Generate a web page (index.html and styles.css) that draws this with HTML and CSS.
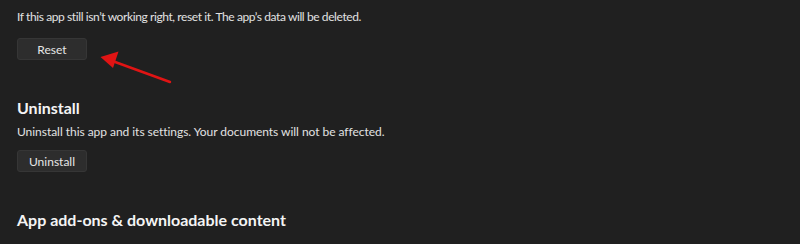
FILE: index.html
```html
<!DOCTYPE html>
<html>
<head>
<meta charset="utf-8">
<link rel="stylesheet" href="styles.css">
</head>
<body>
<div class="page">
  <p class="desc first">If this app still isn’t working right, reset it. The app’s data will be deleted.</p>
  <div class="btn-row reset-row">
    <button class="btn">Reset</button>
    <svg class="arrow" width="90" height="40" viewBox="0 0 90 40">
      <line x1="12" y1="13.5" x2="71" y2="35" stroke="#e01414" stroke-width="2.4" stroke-linecap="round"/>
      <polygon points="1.5,10 19.5,4.5 14,21" fill="#e01414"/>
    </svg>
  </div>
  <h2 class="heading">Uninstall</h2>
  <p class="desc">Uninstall this app and its settings. Your documents will not be affected.</p>
  <div class="btn-row uninstall-row">
    <button class="btn">Uninstall</button>
  </div>
  <h2 class="heading last">App add-ons &amp; downloadable content</h2>
</div>
</body>
</html>
```

FILE: styles.css
```css
html, body {
  margin: 0;
  padding: 0;
  background: #202020;
  width: 800px;
  height: 244px;
  overflow: hidden;
}
.page {
  padding: 9px 0 0 17px;
  font-family: Lato, "Noto Sans", sans-serif;
  color: #e6e6e6;
}
.desc {
  margin: 0;
  font-size: 12px;
  line-height: 16px;
  color: #e2e2e2;
  letter-spacing: -0.04px;
}
.desc.first {
  letter-spacing: -0.4px;
}
.btn-row {
  position: relative;
  height: 22px;
}
.reset-row {
  margin-top: 13px;
}
.uninstall-row {
  margin-top: 10px;
}
.btn {
  display: block;
  width: 70px;
  height: 22px;
  padding: 0;
  background: #2d2d2d;
  border: 1px solid #363636;
  border-radius: 3px;
  color: #e6e6e6;
  font-family: Lato, "Noto Sans", sans-serif;
  font-size: 12px;
}
.arrow {
  position: absolute;
  left: 82px;
  top: 9px;
}
.heading {
  margin: 38px 0 0 0;
  font-size: 16px;
  line-height: 20px;
  font-weight: 700;
  color: #f4f4f4;
}
.heading + .desc {
  margin-top: 6px;
}
```
